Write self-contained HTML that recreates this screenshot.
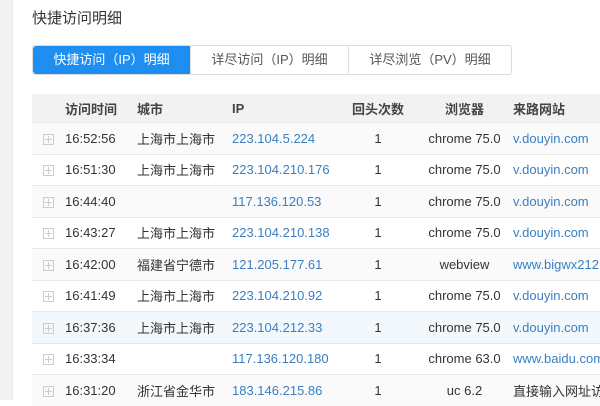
<!DOCTYPE html>
<html><head><meta charset="utf-8"><style>
body{margin:0;width:600px;height:400px;overflow:hidden;background:#fff;font-family:"Liberation Sans","Noto Sans CJK SC",sans-serif;position:relative}
.side{position:absolute;left:0;top:0;width:12px;height:400px;background:#f3f3f3;border-right:1px solid #e8e8e8}
h1{position:absolute;left:32px;top:7px;margin:0;font-size:15px;font-weight:normal;color:#333}
.tabs{position:absolute;left:32px;top:45px;height:28px;display:flex;border:1px solid #ddd;border-radius:3px;font-size:13px;color:#555}
.tabs div{line-height:28px;text-align:center;border-left:1px solid #ddd}
.tabs div.a{background:#1e8ef0;color:#fff;border-left:none;border-radius:3px 0 0 3px}
table{position:absolute;left:32px;top:94px;border-collapse:collapse;font-size:13px;color:#333;width:600px;table-layout:fixed}
th{background:#f2f2f2;height:28px;font-weight:bold;color:#444;text-align:left;padding:0}
td{height:30.5px;border-top:1px solid #e8e8e8;padding:0;white-space:nowrap;overflow:hidden}
tr:nth-child(even) td{background:#fafafa}
tr.h td{background:#f3f8fd}
.c{text-align:center}
.b{color:#3a7fc1}
.i{display:inline-block;width:9px;height:9px;border:1px solid #ccc;margin-left:11px;position:relative;top:2px}
.i:before{content:"";position:absolute;left:1px;right:1px;top:4px;height:1px;background:#ccc}
.i:after{content:"";position:absolute;top:1px;bottom:1px;left:4px;width:1px;background:#ccc}
</style></head><body>
<div class="side"></div>
<h1>快捷访问明细</h1>
<div class="tabs"><div class="a" style="width:157px">快捷访问（IP）明细</div><div style="width:157px">详尽访问（IP）明细</div><div style="width:162px">详尽浏览（PV）明细</div></div>
<table>
<colgroup><col style="width:33px"><col style="width:72px"><col style="width:95px"><col style="width:108px"><col style="width:76px"><col style="width:97px"><col style="width:119px"></colgroup>
<tr><th></th><th>访问时间</th><th>城市</th><th>IP</th><th class="c">回头次数</th><th class="c">浏览器</th><th>来路网站</th></tr>
<tr><td><span class="i"></span></td><td>16:52:56</td><td>上海市上海市</td><td class="b">223.104.5.224</td><td class="c">1</td><td class="c">chrome 75.0</td><td class="b">v.douyin.com</td></tr>
<tr><td><span class="i"></span></td><td>16:51:30</td><td>上海市上海市</td><td class="b">223.104.210.176</td><td class="c">1</td><td class="c">chrome 75.0</td><td class="b">v.douyin.com</td></tr>
<tr><td><span class="i"></span></td><td>16:44:40</td><td></td><td class="b">117.136.120.53</td><td class="c">1</td><td class="c">chrome 75.0</td><td class="b">v.douyin.com</td></tr>
<tr><td><span class="i"></span></td><td>16:43:27</td><td>上海市上海市</td><td class="b">223.104.210.138</td><td class="c">1</td><td class="c">chrome 75.0</td><td class="b">v.douyin.com</td></tr>
<tr><td><span class="i"></span></td><td>16:42:00</td><td>福建省宁德市</td><td class="b">121.205.177.61</td><td class="c">1</td><td class="c">webview</td><td class="b">www.bigwx212.</td></tr>
<tr><td><span class="i"></span></td><td>16:41:49</td><td>上海市上海市</td><td class="b">223.104.210.92</td><td class="c">1</td><td class="c">chrome 75.0</td><td class="b">v.douyin.com</td></tr>
<tr class="h"><td><span class="i"></span></td><td>16:37:36</td><td>上海市上海市</td><td class="b">223.104.212.33</td><td class="c">1</td><td class="c">chrome 75.0</td><td class="b">v.douyin.com</td></tr>
<tr><td><span class="i"></span></td><td>16:33:34</td><td></td><td class="b">117.136.120.180</td><td class="c">1</td><td class="c">chrome 63.0</td><td class="b">www.baidu.com</td></tr>
<tr><td><span class="i"></span></td><td>16:31:20</td><td>浙江省金华市</td><td class="b">183.146.215.86</td><td class="c">1</td><td class="c">uc 6.2</td><td>直接输入网址访问</td></tr>
</table>
</body></html>
